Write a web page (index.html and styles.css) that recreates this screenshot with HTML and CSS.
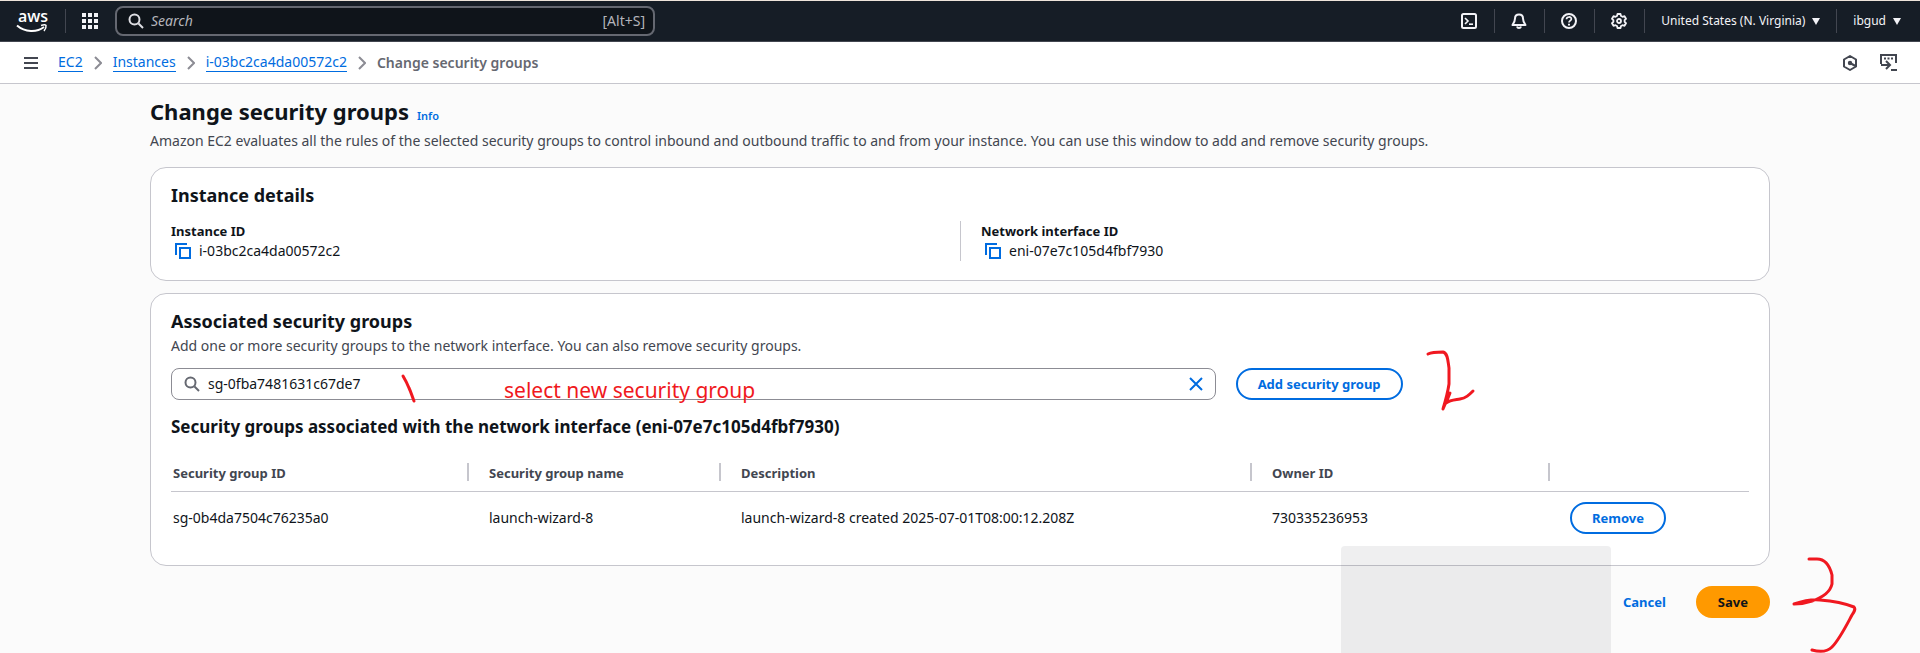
FILE: index.html
```html
<!DOCTYPE html>
<html lang="en">
<head>
<meta charset="utf-8">
<title>Change security groups | EC2</title>
<link rel="stylesheet" href="styles.css">
</head>
<body>
<header class="topbar">
  <a class="logo" href="#" aria-label="AWS">
    <span class="logo-text">aws</span>
    <svg class="logo-smile" viewBox="0 0 32 9" width="32" height="9" fill="none" stroke="#fff" stroke-width="2"><path d="M1 1.500C9 8.500 21 8.500 28 3"/><path d="M25 1.500c3-1 5-.8 5 0 .3 1.500-.7 4-2 5.500" stroke-width="1.500"/></svg>
  </a>
  <span class="rule"></span>
  <button class="icon-btn apps" aria-label="Services">
    <svg viewBox="0 0 16 16" width="16" height="16" fill="#f3f3f7"><path d="M0 0h4v4H0zM6 0h4v4H6zM12 0h4v4h-4zM0 6h4v4H0zM6 6h4v4H6zM12 6h4v4h-4zM0 12h4v4H0zM6 12h4v4H6zM12 12h4v4h-4z"/></svg>
  </button>
  <label class="search">
    <svg viewBox="0 0 16 16" width="16" height="16" fill="none" stroke="#dedee3" stroke-width="2"><circle cx="6.500" cy="6.500" r="5"/><path d="M10.500 10.500 15 15"/></svg>
    <input type="text" placeholder="Search" aria-label="Search">
    <span>[Alt+S]</span>
  </label>
  <nav class="tools">
    <button class="icon-btn" aria-label="CloudShell"><svg viewBox="0 0 16 16" width="16" height="16" fill="none" stroke="#f3f3f7" stroke-width="2"><rect x="1" y="1" width="14" height="14" rx="1.500"/><path d="m4 5 3 3-3 3" stroke-width="1.600"/><path d="M8 11.200h4" stroke-width="1.600"/></svg></button>
    <span class="rule"></span>
    <button class="icon-btn" aria-label="Notifications"><svg viewBox="0 0 16 16" width="16" height="16" fill="none" stroke="#f3f3f7" stroke-width="2" stroke-linejoin="round"><path d="M8 1.500C5.500 1.500 4 3.300 4 5.500 4 8.500 3 10 1.500 12h13C13 10 12 8.500 12 5.500c0-2.200-1.500-4-4-4z"/><path d="M6 13.500c.5 2 3.500 2 4 0" /></svg></button>
    <span class="rule"></span>
    <button class="icon-btn" aria-label="Help"><svg viewBox="0 0 16 16" width="16" height="16" fill="none" stroke="#f3f3f7" stroke-width="2"><circle cx="8" cy="8" r="7"/><path d="M5.500 6.300C5.600 3.200 10.500 3.300 10.400 6 10.300 7.600 8 7.700 8 9.500" stroke-width="1.700"/><path d="M8 10.700v1.800"/></svg></button>
    <span class="rule"></span>
    <button class="icon-btn" aria-label="Settings"><svg viewBox="0 0 16 16" width="16" height="16" fill="none" stroke="#f3f3f7" stroke-width="1.800" stroke-linejoin="round"><path d="M6.500 1h3l.5 2 1.500.8 2-.6L15 5.800 13.600 7.200v1.600L15 10.200l-1.500 2.600-2-.6-1.500.8-.5 2h-3L6 13l-1.500-.8-2 .6L1 10.200l1.400-1.400V7.200L1 5.800l1.500-2.600 2 .6L6 3z"/><circle cx="8" cy="8" r="2"/></svg></button>
    <span class="rule"></span>
    <button class="menu-btn">United States (N. Virginia)<i class="caret"></i></button>
    <span class="rule"></span>
    <button class="menu-btn">ibgud<i class="caret"></i></button>
  </nav>
</header>
<nav class="crumbs" aria-label="Breadcrumbs">
  <button class="icon-btn menu" aria-label="Open menu"><svg viewBox="0 0 14 12" width="14" height="12" stroke="#424650" stroke-width="2"><path d="M0 1h14M0 6h14M0 11h14"/></svg></button>
  <ol>
    <li><a href="#">EC2</a><svg class="sep" viewBox="0 0 8 14" width="8" height="14"><path d="m1 1 6 6-6 6"/></svg></li>
    <li><a href="#">Instances</a><svg class="sep" viewBox="0 0 8 14" width="8" height="14"><path d="m1 1 6 6-6 6"/></svg></li>
    <li><a href="#">i-03bc2ca4da00572c2</a><svg class="sep" viewBox="0 0 8 14" width="8" height="14"><path d="m1 1 6 6-6 6"/></svg></li>
    <li class="current">Change security groups</li>
  </ol>
  <div class="side-tools">
    <button class="icon-btn" aria-label="Amazon Q"><svg viewBox="0 0 16 16" width="16" height="16" fill="none" stroke="#424650" stroke-width="2" stroke-linejoin="round"><path d="M8 1 14 4.500v7L8 15l-6-3.500v-7z"/><circle cx="8" cy="8" r="1.200" fill="#424650"/><path d="m8 8 5.500 3"/></svg></button>
    <button class="icon-btn" aria-label="Session"><svg viewBox="0 0 17 17" width="17" height="17" fill="none" stroke="#424650" stroke-width="2"><path d="M1 10V1h15v8"/><path d="M4 4.500h10" stroke-dasharray="2 1.500"/><path d="M1 11h8M6 7l4 4-4 4M11 16h6"/></svg></button>
  </div>
</nav>
<main class="page">
  <div class="title"><h1>Change security groups</h1><a href="#">Info</a></div>
  <p class="lead">Amazon EC2 evaluates all the rules of the selected security groups to control inbound and outbound traffic to and from your instance. You can use this window to add and remove security groups.</p>

  <section class="card details">
    <h2>Instance details</h2>
    <dl>
      <div>
        <dt>Instance ID</dt>
        <dd><button class="icon-btn" aria-label="Copy instance ID"><svg class="copy" viewBox="0 0 16 16" width="16" height="16"><path d="M1 12V1h11M5 5h10v10H5z"/></svg></button>i-03bc2ca4da00572c2</dd>
      </div>
      <div>
        <dt>Network interface ID</dt>
        <dd><button class="icon-btn" aria-label="Copy network interface ID"><svg class="copy" viewBox="0 0 16 16" width="16" height="16"><path d="M1 12V1h11M5 5h10v10H5z"/></svg></button>eni-07e7c105d4fbf7930</dd>
      </div>
    </dl>
  </section>

  <section class="card groups">
    <h2>Associated security groups</h2>
    <p class="hint">Add one or more security groups to the network interface. You can also remove security groups.</p>
    <div class="picker">
      <div class="field">
        <svg viewBox="0 0 16 16" width="16" height="16" fill="none" stroke="#656871" stroke-width="2"><circle cx="6.500" cy="6.500" r="5"/><path d="M10.500 10.500 15 15"/></svg>
        <input type="text" value="sg-0fba7481631c67de7" aria-label="Select security group">
        <button class="icon-btn" aria-label="Clear"><svg viewBox="0 0 14 14" width="14" height="14" stroke="#006ce0" stroke-width="2"><path d="m1 1 12 12M13 1 1 13"/></svg></button>
      </div>
      <button class="btn">Add security group</button>
      <svg class="ink ink-tick" viewBox="0 0 16 30" width="16" height="30"><path d="M1 1c3 5 4 7 6 12 2 4 3 8 5 13"/></svg>
      <span class="note">select new security group</span>
      <svg class="ink ink-two" viewBox="0 0 52 62" width="52" height="62"><path d="M2 4c4-2 9-2 15-2 5 1 5 10 6 16v16c-1 7-3 15-6 25l7-16-4 10c4-3 8-3 14-4 6-1 9-4 13-8"/></svg>
    </div>
    <h3>Security groups associated with the network interface (eni-07e7c105d4fbf7930)</h3>
    <table>
      <colgroup><col class="c-id"><col class="c-name"><col class="c-desc"><col class="c-owner"><col></colgroup>
      <thead><tr><th><span>Security group ID</span></th><th><span>Security group name</span></th><th><span>Description</span></th><th><span>Owner ID</span></th><th><span></span></th></tr></thead>
      <tbody><tr><td>sg-0b4da7504c76235a0</td><td>launch-wizard-8</td><td>launch-wizard-8 created 2025-07-01T08:00:12.208Z</td><td>730335236953</td><td><button class="btn">Remove</button></td></tr></tbody>
    </table>
  </section>

  <div class="actions">
    <div class="shade"></div>
    <button class="btn link">Cancel</button>
    <button class="btn primary">Save</button>
    <svg class="ink ink-three" viewBox="0 0 68 98" width="68" height="98"><path d="M19 4h8c9 0 13 8 15 16v9c-2 9-11 14-20 17-6 2-12 3-18 3 9-3 18-5 26-4 13 1 24 3 34 7 2 2 0 5-2 8-7 13-13 25-20 32-5 5-13 5-20 3"/></svg>
  </div>
</main>
</body>
</html>
```
FILE: styles.css
```css
* { box-sizing: border-box; }
html { overflow: hidden; }
body {
  min-height: 100vh;
  margin: 0;
  background: #fbfbfb;
  color: #0f141a;
  font: 14px/20px "Noto Sans", "Open Sans", sans-serif;
}
button, input { font: inherit; color: inherit; }
h1, h2, h3, p, dl, dd, ol { margin: 0; padding: 0; }
a { color: #006ce0; }
svg { display: block; flex: none; }
.icon-btn { display: flex; padding: 0; border: 0; background: none; }

.topbar {
  display: flex;
  align-items: center;
  height: 42px;
  padding: 0 19px 0 16px;
  border-top: 1px solid #eee4da;
  border-bottom: 1px solid #424650;
  background: #161d26;
  color: #f3f3f7;
}
.logo { display: block; width: 34px; color: #fff; text-decoration: none; }
.logo-text { display: block; height: 14px; font-family: "Open Sans", sans-serif; font-size: 16px; line-height: 14px; font-weight: 600; text-align: center; }
.logo-smile { margin-top: 1px; }
.rule { width: 1px; height: 24px; background: #424650; }
.logo + .rule { margin-left: 15px; }
.apps { margin: 0 17px 0 16px; }
.search {
  display: flex;
  align-items: center;
  gap: 7px;
  width: 540px;
  height: 30px;
  padding: 0 8px 0 11px;
  border: 2px solid #656871;
  border-radius: 8px;
  background: #0f141a;
  color: #b4b4bb;
}
.search input { flex: 1; min-width: 0; padding: 0; border: 0; background: none; outline: 0; }
.search input::placeholder { color: #b4b4bb; font-style: italic; opacity: 1; }
.tools { display: flex; align-items: center; margin-left: auto; }
.tools .icon-btn { margin: 0 17px 0 16px; }
.menu-btn {
  display: flex;
  align-items: center;
  gap: 7px;
  padding: 0 16px;
  border: 0;
  background: none;
  font-size: 12px;
}
.menu-btn:last-child { padding-right: 0; }
.caret { border: 4px solid transparent; border-top: 7px solid #f3f3f7; border-bottom: 0; }

.crumbs {
  display: flex;
  align-items: center;
  height: 42px;
  padding: 0 23px 0 24px;
  border-bottom: 1px solid #c6c6cd;
  background: #fff;
}
.crumbs ol { display: flex; margin-left: 20px; list-style: none; }
.crumbs li { display: flex; align-items: center; }
.crumbs a { line-height: 18px; text-decoration: none; border-bottom: 1px solid; }
.sep { margin: 0 11px; fill: none; stroke: #8c8c94; stroke-width: 2; }
.current { color: #656871; font-weight: 600; }
.side-tools { display: flex; align-items: center; gap: 22px; margin-left: auto; }

.page { padding: 12px 150px 0; }
.title { display: flex; align-items: baseline; gap: 8px; }
h1 { font-size: 22px; line-height: 30px; font-weight: 700; }
.title a { font-size: 11px; font-weight: 600; text-decoration: none; }
.lead { margin: 5px 0 16px; color: #424650; }
.card {
  margin-bottom: 12px;
  padding: 15px 20px 0;
  border: 1px solid #c6c6cd;
  border-radius: 16px;
  background: #fff;
}
h2 { font-size: 18px; line-height: 24px; font-weight: 700; }
.details { padding-bottom: 19px; }
dl { display: grid; grid-template-columns: 1fr 1fr; margin-top: 14px; }
dl > div + div { padding-left: 20px; border-left: 1px solid #c6c6cd; }
dt { font-size: 13px; font-weight: 700; }
dd { display: flex; align-items: center; gap: 8px; padding-left: 4px; }
.copy { fill: none; stroke: #006ce0; stroke-width: 2; }

.hint { margin-top: 3px; color: #424650; }
.picker { position: relative; display: flex; gap: 20px; margin: 12px 0 15px; }
.field {
  display: flex;
  align-items: center;
  gap: 8px;
  flex: 0 0 66.200%;
  height: 32px;
  padding: 0 12px;
  border: 1px solid #8c8c94;
  border-radius: 8px;
}
.field input { flex: 1; min-width: 0; padding: 0; border: 0; outline: 0; background: none; }
.btn {
  height: 32px;
  padding: 0 20px;
  border: 2px solid #006ce0;
  border-radius: 20px;
  background: #fff;
  color: #006ce0;
  font-size: 13px;
  font-weight: 700;
}
.btn.link { border-color: transparent; background: none; }
.btn.primary { border-color: #ff9900; background: #ff9900; color: #0f141a; }
h3 { font-size: 17px; line-height: 24px; font-weight: 700; }
table { width: 100%; margin-top: 12px; border-collapse: collapse; table-layout: fixed; }
.c-id { width: 298px; }
.c-name { width: 252px; }
.c-desc { width: 531px; }
.c-owner { width: 298px; }
th { height: 40px; padding: 2px 0 0; border-bottom: 1px solid #c6c6cd; color: #424650; font-size: 13px; font-weight: 700; text-align: left; }
th span { display: block; height: 18px; padding-left: 20px; line-height: 20px; border-right: 2px solid #c6c6cd; }
th:last-child span { border: 0; }
td { height: 54px; padding: 0 0 0 20px; }
th:first-child span, td:first-child { padding-left: 2px; }
.groups { padding-bottom: 20px; }

.actions { position: relative; display: flex; justify-content: flex-end; gap: 8px; margin-top: 20px; }
.shade {
  position: absolute;
  top: -40px;
  right: 159px;
  width: 270px;
  height: 107px;
  border-radius: 4px 4px 0 0;
  background: rgba(30, 30, 40, 0.07);
}
.ink { position: absolute; fill: none; stroke: #f01820; stroke-width: 3; stroke-linecap: round; stroke-linejoin: round; overflow: visible; }
.ink-tick { left: 231px; top: 7px; }
.ink-two { left: 1255px; top: -18px; }
.ink-three { right: -88px; top: -31px; }
.note { position: absolute; left: 333px; top: 8px; color: #f01820; font-size: 21px; line-height: 28px; }
```
